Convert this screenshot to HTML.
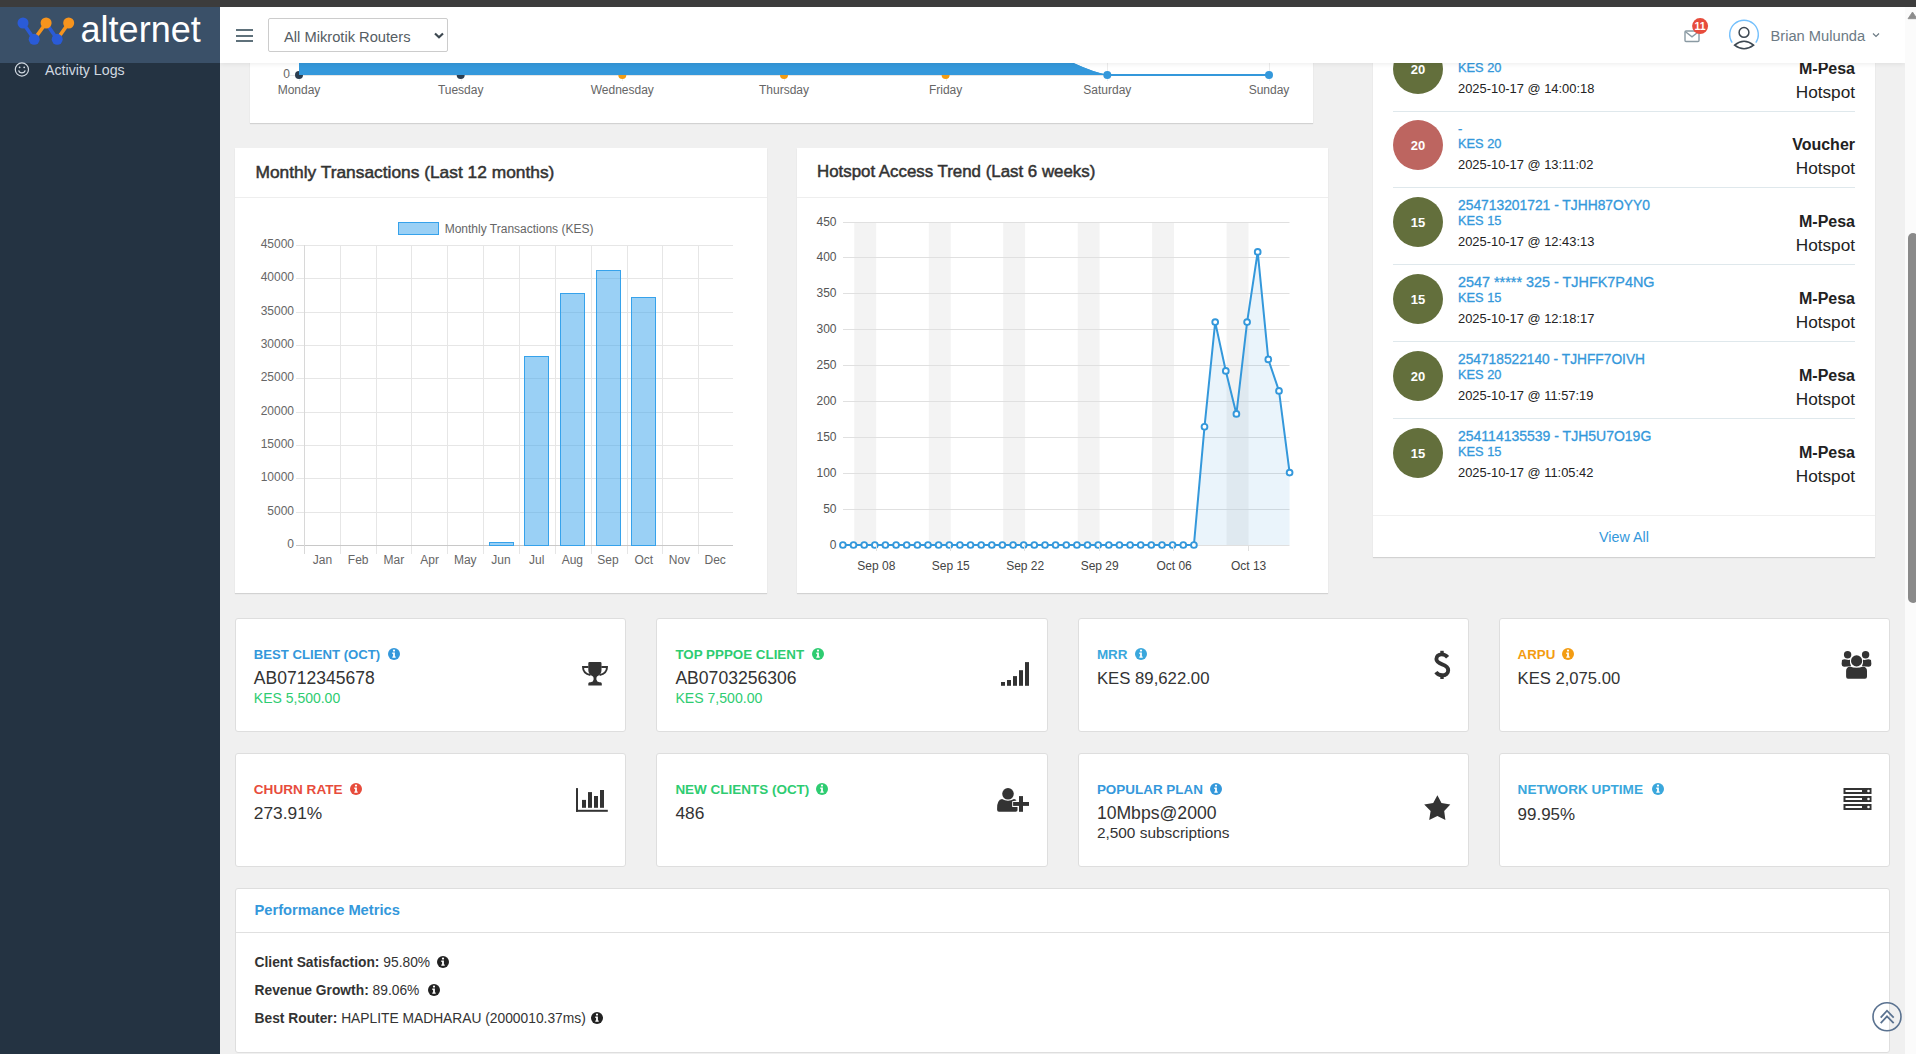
<!DOCTYPE html>
<html><head><meta charset="utf-8"><style>
html,body{margin:0;padding:0;}
body{width:1916px;height:1054px;overflow:hidden;position:relative;background:#f0f0f0;font-family:"Liberation Sans",sans-serif;}
.t{position:absolute;white-space:nowrap;}
</style></head><body>
<div style="position:absolute;left:250px;top:0px;width:1063px;height:123px;background:#fff;box-shadow:0 1px 1px rgba(0,0,0,0.12);"></div>
<div style="position:absolute;left:235px;top:148px;width:532px;height:445px;background:#fff;box-shadow:0 1px 1px rgba(0,0,0,0.12);"></div>
<div style="position:absolute;left:235px;top:197px;width:532px;height:1px;background:#eee;"></div>
<div style="position:absolute;left:797px;top:148px;width:531px;height:445px;background:#fff;box-shadow:0 1px 1px rgba(0,0,0,0.12);"></div>
<div style="position:absolute;left:797px;top:197px;width:531px;height:1px;background:#eee;"></div>
<div style="position:absolute;left:1373px;top:0px;width:502px;height:557px;background:#fff;box-shadow:0 1px 1px rgba(0,0,0,0.12);"></div>
<div style="position:absolute;left:1373px;top:515px;width:502px;height:1px;background:#f0f0f0;"></div>
<div style="position:absolute;left:235px;top:618px;width:391px;height:114px;background:#fff;border:1px solid #dedede;border-radius:3px;box-sizing:border-box;"></div>
<div style="position:absolute;left:656px;top:618px;width:392px;height:114px;background:#fff;border:1px solid #dedede;border-radius:3px;box-sizing:border-box;"></div>
<div style="position:absolute;left:1078px;top:618px;width:391px;height:114px;background:#fff;border:1px solid #dedede;border-radius:3px;box-sizing:border-box;"></div>
<div style="position:absolute;left:1499px;top:618px;width:391px;height:114px;background:#fff;border:1px solid #dedede;border-radius:3px;box-sizing:border-box;"></div>
<div style="position:absolute;left:235px;top:753px;width:391px;height:114px;background:#fff;border:1px solid #dedede;border-radius:3px;box-sizing:border-box;"></div>
<div style="position:absolute;left:656px;top:753px;width:392px;height:114px;background:#fff;border:1px solid #dedede;border-radius:3px;box-sizing:border-box;"></div>
<div style="position:absolute;left:1078px;top:753px;width:391px;height:114px;background:#fff;border:1px solid #dedede;border-radius:3px;box-sizing:border-box;"></div>
<div style="position:absolute;left:1499px;top:753px;width:391px;height:114px;background:#fff;border:1px solid #dedede;border-radius:3px;box-sizing:border-box;"></div>
<div style="position:absolute;left:235px;top:888px;width:1655px;height:165px;background:#fff;border:1px solid #dedede;border-radius:3px;box-sizing:border-box;"></div>
<div style="position:absolute;left:236px;top:932px;width:1653px;height:1px;background:#e0e0e0;"></div>
<svg style="position:absolute;left:0;top:0" width="1916" height="1054"><path d="M299 75 L299 63 L1073.5 63 Q1094 72.5 1108.5 75 Z" fill="#3498db"/><line x1="289" y1="75.5" x2="1269" y2="75.5" stroke="#e5e5e5" stroke-width="1"/><line x1="1108.5" y1="75" x2="1269" y2="75" stroke="#3498db" stroke-width="2"/><line x1="299.5" y1="63" x2="299.5" y2="81" stroke="#ececec" stroke-width="1"/><circle cx="299" cy="75" r="4" fill="#2c3e50"/><line x1="461.5" y1="63" x2="461.5" y2="81" stroke="#ececec" stroke-width="1"/><circle cx="460.7" cy="75" r="4" fill="#2c3e50"/><line x1="622.5" y1="63" x2="622.5" y2="81" stroke="#ececec" stroke-width="1"/><circle cx="622.3" cy="75" r="4" fill="#f39c12"/><line x1="784.5" y1="63" x2="784.5" y2="81" stroke="#ececec" stroke-width="1"/><circle cx="784" cy="75" r="4" fill="#f39c12"/><line x1="946.5" y1="63" x2="946.5" y2="81" stroke="#ececec" stroke-width="1"/><circle cx="945.6" cy="75" r="4" fill="#f39c12"/><line x1="1107.5" y1="63" x2="1107.5" y2="81" stroke="#ececec" stroke-width="1"/><circle cx="1107.3" cy="75" r="4" fill="#3498db"/><line x1="1269.5" y1="63" x2="1269.5" y2="81" stroke="#ececec" stroke-width="1"/><circle cx="1269" cy="75" r="4" fill="#3498db"/><path d="M299 63 L1073.5 63 Q1094 72.5 1108.5 75 L299 75 Z" fill="#3498db"/><line x1="296" y1="545.5" x2="733" y2="545.5" stroke="#e6e6e6" stroke-width="1"/><line x1="296" y1="512.5" x2="733" y2="512.5" stroke="#e6e6e6" stroke-width="1"/><line x1="296" y1="478.5" x2="733" y2="478.5" stroke="#e6e6e6" stroke-width="1"/><line x1="296" y1="445.5" x2="733" y2="445.5" stroke="#e6e6e6" stroke-width="1"/><line x1="296" y1="412.5" x2="733" y2="412.5" stroke="#e6e6e6" stroke-width="1"/><line x1="296" y1="378.5" x2="733" y2="378.5" stroke="#e6e6e6" stroke-width="1"/><line x1="296" y1="345.5" x2="733" y2="345.5" stroke="#e6e6e6" stroke-width="1"/><line x1="296" y1="312.5" x2="733" y2="312.5" stroke="#e6e6e6" stroke-width="1"/><line x1="296" y1="278.5" x2="733" y2="278.5" stroke="#e6e6e6" stroke-width="1"/><line x1="296" y1="245.5" x2="733" y2="245.5" stroke="#e6e6e6" stroke-width="1"/><line x1="304.5" y1="245" x2="304.5" y2="554" stroke="#e6e6e6" stroke-width="1"/><line x1="340.5" y1="245" x2="340.5" y2="554" stroke="#e6e6e6" stroke-width="1"/><line x1="376.5" y1="245" x2="376.5" y2="554" stroke="#e6e6e6" stroke-width="1"/><line x1="411.5" y1="245" x2="411.5" y2="554" stroke="#e6e6e6" stroke-width="1"/><line x1="447.5" y1="245" x2="447.5" y2="554" stroke="#e6e6e6" stroke-width="1"/><line x1="483.5" y1="245" x2="483.5" y2="554" stroke="#e6e6e6" stroke-width="1"/><line x1="519.5" y1="245" x2="519.5" y2="554" stroke="#e6e6e6" stroke-width="1"/><line x1="555.5" y1="245" x2="555.5" y2="554" stroke="#e6e6e6" stroke-width="1"/><line x1="591.5" y1="245" x2="591.5" y2="554" stroke="#e6e6e6" stroke-width="1"/><line x1="627.5" y1="245" x2="627.5" y2="554" stroke="#e6e6e6" stroke-width="1"/><line x1="662.5" y1="245" x2="662.5" y2="554" stroke="#e6e6e6" stroke-width="1"/><line x1="698.5" y1="245" x2="698.5" y2="554" stroke="#e6e6e6" stroke-width="1"/><line x1="296" y1="545.5" x2="733" y2="545.5" stroke="#c8c8c8" stroke-width="1"/><line x1="304.5" y1="245" x2="304.5" y2="554" stroke="#d8d8d8" stroke-width="1"/><rect x="489.5" y="542.5" width="24" height="3" fill="rgba(54,162,235,0.5)" stroke="#36a2eb" stroke-width="1"/><rect x="524.5" y="356.5" width="24" height="189" fill="rgba(54,162,235,0.5)" stroke="#36a2eb" stroke-width="1"/><rect x="560.5" y="293.5" width="24" height="252" fill="rgba(54,162,235,0.5)" stroke="#36a2eb" stroke-width="1"/><rect x="596.5" y="270.5" width="24" height="275" fill="rgba(54,162,235,0.5)" stroke="#36a2eb" stroke-width="1"/><rect x="631.5" y="297.5" width="24" height="248" fill="rgba(54,162,235,0.5)" stroke="#36a2eb" stroke-width="1"/><rect x="398.5" y="222.5" width="40" height="12" fill="rgba(54,162,235,0.5)" stroke="#36a2eb" stroke-width="1"/><rect x="854.3" y="223" width="21.9" height="322" fill="#f3f3f3"/><rect x="928.8" y="223" width="21.9" height="322" fill="#f3f3f3"/><rect x="1003.2" y="223" width="21.9" height="322" fill="#f3f3f3"/><rect x="1077.7" y="223" width="21.9" height="322" fill="#f3f3f3"/><rect x="1152.1" y="223" width="21.9" height="322" fill="#f3f3f3"/><rect x="1226.6" y="223" width="21.9" height="322" fill="#f3f3f3"/><line x1="843" y1="545.5" x2="1289.5" y2="545.5" stroke="#e0e0e0" stroke-width="1"/><line x1="843" y1="509.5" x2="1289.5" y2="509.5" stroke="#e0e0e0" stroke-width="1"/><line x1="843" y1="473.5" x2="1289.5" y2="473.5" stroke="#e0e0e0" stroke-width="1"/><line x1="843" y1="437.5" x2="1289.5" y2="437.5" stroke="#e0e0e0" stroke-width="1"/><line x1="843" y1="401.5" x2="1289.5" y2="401.5" stroke="#e0e0e0" stroke-width="1"/><line x1="843" y1="365.5" x2="1289.5" y2="365.5" stroke="#e0e0e0" stroke-width="1"/><line x1="843" y1="329.5" x2="1289.5" y2="329.5" stroke="#e0e0e0" stroke-width="1"/><line x1="843" y1="293.5" x2="1289.5" y2="293.5" stroke="#e0e0e0" stroke-width="1"/><line x1="843" y1="257.5" x2="1289.5" y2="257.5" stroke="#e0e0e0" stroke-width="1"/><line x1="843" y1="222.5" x2="1289.5" y2="222.5" stroke="#e0e0e0" stroke-width="1"/><path d="M842.9 545.0 L853.5 545.0 L864.2 545.0 L874.8 545.0 L885.4 545.0 L896.1 545.0 L906.7 545.0 L917.4 545.0 L928.0 545.0 L938.6 545.0 L949.3 545.0 L959.9 545.0 L970.5 545.0 L981.2 545.0 L991.8 545.0 L1002.4 545.0 L1013.1 545.0 L1023.7 545.0 L1034.3 545.0 L1045.0 545.0 L1055.6 545.0 L1066.3 545.0 L1076.9 545.0 L1087.5 545.0 L1098.2 545.0 L1108.8 545.0 L1119.4 545.0 L1130.1 545.0 L1140.7 545.0 L1151.3 545.0 L1162.0 545.0 L1172.6 545.0 L1183.3 545.0 L1193.9 545.0 L1204.5 426.8 L1215.2 322.1 L1225.8 370.9 L1236.4 413.9 L1247.1 322.1 L1257.7 251.9 L1268.3 359.4 L1279.0 390.9 L1289.6 472.6 L1289.6 545 L842.9 545 Z" fill="rgba(52,152,219,0.1)"/><path d="M842.9 545.0 L853.5 545.0 L864.2 545.0 L874.8 545.0 L885.4 545.0 L896.1 545.0 L906.7 545.0 L917.4 545.0 L928.0 545.0 L938.6 545.0 L949.3 545.0 L959.9 545.0 L970.5 545.0 L981.2 545.0 L991.8 545.0 L1002.4 545.0 L1013.1 545.0 L1023.7 545.0 L1034.3 545.0 L1045.0 545.0 L1055.6 545.0 L1066.3 545.0 L1076.9 545.0 L1087.5 545.0 L1098.2 545.0 L1108.8 545.0 L1119.4 545.0 L1130.1 545.0 L1140.7 545.0 L1151.3 545.0 L1162.0 545.0 L1172.6 545.0 L1183.3 545.0 L1193.9 545.0 L1204.5 426.8 L1215.2 322.1 L1225.8 370.9 L1236.4 413.9 L1247.1 322.1 L1257.7 251.9 L1268.3 359.4 L1279.0 390.9 L1289.6 472.6" fill="none" stroke="#3498db" stroke-width="2"/><circle cx="842.9" cy="545.0" r="2.9" fill="#fff" stroke="#3498db" stroke-width="1.9"/><circle cx="853.5" cy="545.0" r="2.9" fill="#fff" stroke="#3498db" stroke-width="1.9"/><circle cx="864.2" cy="545.0" r="2.9" fill="#fff" stroke="#3498db" stroke-width="1.9"/><circle cx="874.8" cy="545.0" r="2.9" fill="#fff" stroke="#3498db" stroke-width="1.9"/><circle cx="885.4" cy="545.0" r="2.9" fill="#fff" stroke="#3498db" stroke-width="1.9"/><circle cx="896.1" cy="545.0" r="2.9" fill="#fff" stroke="#3498db" stroke-width="1.9"/><circle cx="906.7" cy="545.0" r="2.9" fill="#fff" stroke="#3498db" stroke-width="1.9"/><circle cx="917.4" cy="545.0" r="2.9" fill="#fff" stroke="#3498db" stroke-width="1.9"/><circle cx="928.0" cy="545.0" r="2.9" fill="#fff" stroke="#3498db" stroke-width="1.9"/><circle cx="938.6" cy="545.0" r="2.9" fill="#fff" stroke="#3498db" stroke-width="1.9"/><circle cx="949.3" cy="545.0" r="2.9" fill="#fff" stroke="#3498db" stroke-width="1.9"/><circle cx="959.9" cy="545.0" r="2.9" fill="#fff" stroke="#3498db" stroke-width="1.9"/><circle cx="970.5" cy="545.0" r="2.9" fill="#fff" stroke="#3498db" stroke-width="1.9"/><circle cx="981.2" cy="545.0" r="2.9" fill="#fff" stroke="#3498db" stroke-width="1.9"/><circle cx="991.8" cy="545.0" r="2.9" fill="#fff" stroke="#3498db" stroke-width="1.9"/><circle cx="1002.4" cy="545.0" r="2.9" fill="#fff" stroke="#3498db" stroke-width="1.9"/><circle cx="1013.1" cy="545.0" r="2.9" fill="#fff" stroke="#3498db" stroke-width="1.9"/><circle cx="1023.7" cy="545.0" r="2.9" fill="#fff" stroke="#3498db" stroke-width="1.9"/><circle cx="1034.3" cy="545.0" r="2.9" fill="#fff" stroke="#3498db" stroke-width="1.9"/><circle cx="1045.0" cy="545.0" r="2.9" fill="#fff" stroke="#3498db" stroke-width="1.9"/><circle cx="1055.6" cy="545.0" r="2.9" fill="#fff" stroke="#3498db" stroke-width="1.9"/><circle cx="1066.3" cy="545.0" r="2.9" fill="#fff" stroke="#3498db" stroke-width="1.9"/><circle cx="1076.9" cy="545.0" r="2.9" fill="#fff" stroke="#3498db" stroke-width="1.9"/><circle cx="1087.5" cy="545.0" r="2.9" fill="#fff" stroke="#3498db" stroke-width="1.9"/><circle cx="1098.2" cy="545.0" r="2.9" fill="#fff" stroke="#3498db" stroke-width="1.9"/><circle cx="1108.8" cy="545.0" r="2.9" fill="#fff" stroke="#3498db" stroke-width="1.9"/><circle cx="1119.4" cy="545.0" r="2.9" fill="#fff" stroke="#3498db" stroke-width="1.9"/><circle cx="1130.1" cy="545.0" r="2.9" fill="#fff" stroke="#3498db" stroke-width="1.9"/><circle cx="1140.7" cy="545.0" r="2.9" fill="#fff" stroke="#3498db" stroke-width="1.9"/><circle cx="1151.3" cy="545.0" r="2.9" fill="#fff" stroke="#3498db" stroke-width="1.9"/><circle cx="1162.0" cy="545.0" r="2.9" fill="#fff" stroke="#3498db" stroke-width="1.9"/><circle cx="1172.6" cy="545.0" r="2.9" fill="#fff" stroke="#3498db" stroke-width="1.9"/><circle cx="1183.3" cy="545.0" r="2.9" fill="#fff" stroke="#3498db" stroke-width="1.9"/><circle cx="1193.9" cy="545.0" r="2.9" fill="#fff" stroke="#3498db" stroke-width="1.9"/><circle cx="1204.5" cy="426.8" r="2.9" fill="#fff" stroke="#3498db" stroke-width="1.9"/><circle cx="1215.2" cy="322.1" r="2.9" fill="#fff" stroke="#3498db" stroke-width="1.9"/><circle cx="1225.8" cy="370.9" r="2.9" fill="#fff" stroke="#3498db" stroke-width="1.9"/><circle cx="1236.4" cy="413.9" r="2.9" fill="#fff" stroke="#3498db" stroke-width="1.9"/><circle cx="1247.1" cy="322.1" r="2.9" fill="#fff" stroke="#3498db" stroke-width="1.9"/><circle cx="1257.7" cy="251.9" r="2.9" fill="#fff" stroke="#3498db" stroke-width="1.9"/><circle cx="1268.3" cy="359.4" r="2.9" fill="#fff" stroke="#3498db" stroke-width="1.9"/><circle cx="1279.0" cy="390.9" r="2.9" fill="#fff" stroke="#3498db" stroke-width="1.9"/><circle cx="1289.6" cy="472.6" r="2.9" fill="#fff" stroke="#3498db" stroke-width="1.9"/><line x1="876.5" y1="545" x2="876.5" y2="551" stroke="#e0e0e0" stroke-width="1"/><line x1="950.5" y1="545" x2="950.5" y2="551" stroke="#e0e0e0" stroke-width="1"/><line x1="1024.5" y1="545" x2="1024.5" y2="551" stroke="#e0e0e0" stroke-width="1"/><line x1="1099.5" y1="545" x2="1099.5" y2="551" stroke="#e0e0e0" stroke-width="1"/><line x1="1173.5" y1="545" x2="1173.5" y2="551" stroke="#e0e0e0" stroke-width="1"/><line x1="1248.5" y1="545" x2="1248.5" y2="551" stroke="#e0e0e0" stroke-width="1"/></svg>
<div class="t" style="right:1626.00px;top:68.34px;font-size:12px;line-height:12px;color:#666;font-weight:400;">0</div>
<div class="t" style="left:-1.00px;width:600px;text-align:center;top:83.94px;font-size:12px;line-height:12px;color:#666;font-weight:400;">Monday</div>
<div class="t" style="left:160.70px;width:600px;text-align:center;top:83.94px;font-size:12px;line-height:12px;color:#666;font-weight:400;">Tuesday</div>
<div class="t" style="left:322.30px;width:600px;text-align:center;top:83.94px;font-size:12px;line-height:12px;color:#666;font-weight:400;">Wednesday</div>
<div class="t" style="left:484.00px;width:600px;text-align:center;top:83.94px;font-size:12px;line-height:12px;color:#666;font-weight:400;">Thursday</div>
<div class="t" style="left:645.60px;width:600px;text-align:center;top:83.94px;font-size:12px;line-height:12px;color:#666;font-weight:400;">Friday</div>
<div class="t" style="left:807.30px;width:600px;text-align:center;top:83.94px;font-size:12px;line-height:12px;color:#666;font-weight:400;">Saturday</div>
<div class="t" style="left:969.00px;width:600px;text-align:center;top:83.94px;font-size:12px;line-height:12px;color:#666;font-weight:400;">Sunday</div>
<div class="t" style="left:255.50px;top:163.61px;font-size:17.35px;line-height:17.35px;color:#333;font-weight:400;-webkit-text-stroke:0.5px #333;">Monthly Transactions (Last 12 months)</div>
<div class="t" style="left:817.00px;top:164.02px;font-size:16.87px;line-height:16.87px;color:#333;font-weight:400;-webkit-text-stroke:0.5px #333;">Hotspot Access Trend (Last 6 weeks)</div>
<div class="t" style="left:444.70px;top:222.54px;font-size:12px;line-height:12px;color:#666;font-weight:400;">Monthly Transactions (KES)</div>
<div class="t" style="right:1622.00px;top:537.94px;font-size:12px;line-height:12px;color:#666;font-weight:400;">0</div>
<div class="t" style="right:1622.00px;top:504.94px;font-size:12px;line-height:12px;color:#666;font-weight:400;">5000</div>
<div class="t" style="right:1622.00px;top:470.94px;font-size:12px;line-height:12px;color:#666;font-weight:400;">10000</div>
<div class="t" style="right:1622.00px;top:437.94px;font-size:12px;line-height:12px;color:#666;font-weight:400;">15000</div>
<div class="t" style="right:1622.00px;top:404.94px;font-size:12px;line-height:12px;color:#666;font-weight:400;">20000</div>
<div class="t" style="right:1622.00px;top:370.94px;font-size:12px;line-height:12px;color:#666;font-weight:400;">25000</div>
<div class="t" style="right:1622.00px;top:337.94px;font-size:12px;line-height:12px;color:#666;font-weight:400;">30000</div>
<div class="t" style="right:1622.00px;top:304.94px;font-size:12px;line-height:12px;color:#666;font-weight:400;">35000</div>
<div class="t" style="right:1622.00px;top:270.94px;font-size:12px;line-height:12px;color:#666;font-weight:400;">40000</div>
<div class="t" style="right:1622.00px;top:237.94px;font-size:12px;line-height:12px;color:#666;font-weight:400;">45000</div>
<div class="t" style="left:22.45px;width:600px;text-align:center;top:554.14px;font-size:12px;line-height:12px;color:#666;font-weight:400;">Jan</div>
<div class="t" style="left:58.15px;width:600px;text-align:center;top:554.14px;font-size:12px;line-height:12px;color:#666;font-weight:400;">Feb</div>
<div class="t" style="left:93.85px;width:600px;text-align:center;top:554.14px;font-size:12px;line-height:12px;color:#666;font-weight:400;">Mar</div>
<div class="t" style="left:129.55px;width:600px;text-align:center;top:554.14px;font-size:12px;line-height:12px;color:#666;font-weight:400;">Apr</div>
<div class="t" style="left:165.25px;width:600px;text-align:center;top:554.14px;font-size:12px;line-height:12px;color:#666;font-weight:400;">May</div>
<div class="t" style="left:200.95px;width:600px;text-align:center;top:554.14px;font-size:12px;line-height:12px;color:#666;font-weight:400;">Jun</div>
<div class="t" style="left:236.65px;width:600px;text-align:center;top:554.14px;font-size:12px;line-height:12px;color:#666;font-weight:400;">Jul</div>
<div class="t" style="left:272.35px;width:600px;text-align:center;top:554.14px;font-size:12px;line-height:12px;color:#666;font-weight:400;">Aug</div>
<div class="t" style="left:308.05px;width:600px;text-align:center;top:554.14px;font-size:12px;line-height:12px;color:#666;font-weight:400;">Sep</div>
<div class="t" style="left:343.75px;width:600px;text-align:center;top:554.14px;font-size:12px;line-height:12px;color:#666;font-weight:400;">Oct</div>
<div class="t" style="left:379.45px;width:600px;text-align:center;top:554.14px;font-size:12px;line-height:12px;color:#666;font-weight:400;">Nov</div>
<div class="t" style="left:415.15px;width:600px;text-align:center;top:554.14px;font-size:12px;line-height:12px;color:#666;font-weight:400;">Dec</div>
<div class="t" style="right:1079.50px;top:539.14px;font-size:12px;line-height:12px;color:#555;font-weight:400;">0</div>
<div class="t" style="right:1079.50px;top:503.14px;font-size:12px;line-height:12px;color:#555;font-weight:400;">50</div>
<div class="t" style="right:1079.50px;top:467.14px;font-size:12px;line-height:12px;color:#555;font-weight:400;">100</div>
<div class="t" style="right:1079.50px;top:431.14px;font-size:12px;line-height:12px;color:#555;font-weight:400;">150</div>
<div class="t" style="right:1079.50px;top:395.14px;font-size:12px;line-height:12px;color:#555;font-weight:400;">200</div>
<div class="t" style="right:1079.50px;top:359.14px;font-size:12px;line-height:12px;color:#555;font-weight:400;">250</div>
<div class="t" style="right:1079.50px;top:323.14px;font-size:12px;line-height:12px;color:#555;font-weight:400;">300</div>
<div class="t" style="right:1079.50px;top:287.14px;font-size:12px;line-height:12px;color:#555;font-weight:400;">350</div>
<div class="t" style="right:1079.50px;top:251.14px;font-size:12px;line-height:12px;color:#555;font-weight:400;">400</div>
<div class="t" style="right:1079.50px;top:216.14px;font-size:12px;line-height:12px;color:#555;font-weight:400;">450</div>
<div class="t" style="left:576.31px;width:600px;text-align:center;top:559.54px;font-size:12px;line-height:12px;color:#444;font-weight:400;">Sep 08</div>
<div class="t" style="left:650.76px;width:600px;text-align:center;top:559.54px;font-size:12px;line-height:12px;color:#444;font-weight:400;">Sep 15</div>
<div class="t" style="left:725.21px;width:600px;text-align:center;top:559.54px;font-size:12px;line-height:12px;color:#444;font-weight:400;">Sep 22</div>
<div class="t" style="left:799.66px;width:600px;text-align:center;top:559.54px;font-size:12px;line-height:12px;color:#444;font-weight:400;">Sep 29</div>
<div class="t" style="left:874.12px;width:600px;text-align:center;top:559.54px;font-size:12px;line-height:12px;color:#444;font-weight:400;">Oct 06</div>
<div class="t" style="left:948.57px;width:600px;text-align:center;top:559.54px;font-size:12px;line-height:12px;color:#444;font-weight:400;">Oct 13</div>
<div style="position:absolute;left:1393px;top:43.9px;width:50px;height:50px;background:#636f3c;border-radius:50%;"></div>
<div class="t" style="left:1118.00px;width:600px;text-align:center;top:62.70px;font-size:13px;line-height:13px;color:#fff;font-weight:700;">20</div>
<div class="t" style="left:1458.00px;top:45.49px;font-size:13.83px;line-height:13.83px;color:#3498db;font-weight:400;-webkit-text-stroke:0.3px #3498db;">254700000000 - TJHHOLD0</div>
<div class="t" style="left:1458.00px;top:61.96px;font-size:12.8px;line-height:12.8px;color:#3498db;font-weight:400;-webkit-text-stroke:0.3px #3498db;">KES 20</div>
<div class="t" style="left:1458.00px;top:83.18px;font-size:12.9px;line-height:12.9px;color:#222;font-weight:400;">2025-10-17 @ 14:00:18</div>
<div class="t" style="right:61.00px;top:60.66px;font-size:16px;line-height:16px;color:#222;font-weight:700;">M-Pesa</div>
<div class="t" style="right:61.00px;top:83.64px;font-size:17.2px;line-height:17.2px;color:#222;font-weight:400;">Hotspot</div>
<div style="position:absolute;left:1393px;top:111.19999999999999px;width:462px;height:1px;background:#dfe8ec;"></div>
<div style="position:absolute;left:1393px;top:120px;width:50px;height:50px;background:#bd6560;border-radius:50%;"></div>
<div class="t" style="left:1118.00px;width:600px;text-align:center;top:138.80px;font-size:13px;line-height:13px;color:#fff;font-weight:700;">20</div>
<div class="t" style="left:1458.00px;top:122.30px;font-size:13px;line-height:13px;color:#3498db;font-weight:400;-webkit-text-stroke:0.3px #3498db;">-</div>
<div class="t" style="left:1458.00px;top:138.06px;font-size:12.8px;line-height:12.8px;color:#3498db;font-weight:400;-webkit-text-stroke:0.3px #3498db;">KES 20</div>
<div class="t" style="left:1458.00px;top:159.28px;font-size:12.9px;line-height:12.9px;color:#222;font-weight:400;">2025-10-17 @ 13:11:02</div>
<div class="t" style="right:61.00px;top:136.76px;font-size:16px;line-height:16px;color:#222;font-weight:700;">Voucher</div>
<div class="t" style="right:61.00px;top:159.74px;font-size:17.2px;line-height:17.2px;color:#222;font-weight:400;">Hotspot</div>
<div style="position:absolute;left:1393px;top:187.3px;width:462px;height:1px;background:#dfe8ec;"></div>
<div style="position:absolute;left:1393px;top:197px;width:50px;height:50px;background:#636f3c;border-radius:50%;"></div>
<div class="t" style="left:1118.00px;width:600px;text-align:center;top:215.80px;font-size:13px;line-height:13px;color:#fff;font-weight:700;">15</div>
<div class="t" style="left:1458.00px;top:198.59px;font-size:13.83px;line-height:13.83px;color:#3498db;font-weight:400;-webkit-text-stroke:0.3px #3498db;">254713201721 - TJHH87OYY0</div>
<div class="t" style="left:1458.00px;top:215.06px;font-size:12.8px;line-height:12.8px;color:#3498db;font-weight:400;-webkit-text-stroke:0.3px #3498db;">KES 15</div>
<div class="t" style="left:1458.00px;top:236.28px;font-size:12.9px;line-height:12.9px;color:#222;font-weight:400;">2025-10-17 @ 12:43:13</div>
<div class="t" style="right:61.00px;top:213.76px;font-size:16px;line-height:16px;color:#222;font-weight:700;">M-Pesa</div>
<div class="t" style="right:61.00px;top:236.74px;font-size:17.2px;line-height:17.2px;color:#222;font-weight:400;">Hotspot</div>
<div style="position:absolute;left:1393px;top:264.3px;width:462px;height:1px;background:#dfe8ec;"></div>
<div style="position:absolute;left:1393px;top:274px;width:50px;height:50px;background:#636f3c;border-radius:50%;"></div>
<div class="t" style="left:1118.00px;width:600px;text-align:center;top:292.80px;font-size:13px;line-height:13px;color:#fff;font-weight:700;">15</div>
<div class="t" style="left:1458.00px;top:275.11px;font-size:14.4px;line-height:14.4px;color:#3498db;font-weight:400;-webkit-text-stroke:0.3px #3498db;">2547 ***** 325 - TJHFK7P4NG</div>
<div class="t" style="left:1458.00px;top:292.06px;font-size:12.8px;line-height:12.8px;color:#3498db;font-weight:400;-webkit-text-stroke:0.3px #3498db;">KES 15</div>
<div class="t" style="left:1458.00px;top:313.28px;font-size:12.9px;line-height:12.9px;color:#222;font-weight:400;">2025-10-17 @ 12:18:17</div>
<div class="t" style="right:61.00px;top:290.76px;font-size:16px;line-height:16px;color:#222;font-weight:700;">M-Pesa</div>
<div class="t" style="right:61.00px;top:313.74px;font-size:17.2px;line-height:17.2px;color:#222;font-weight:400;">Hotspot</div>
<div style="position:absolute;left:1393px;top:341.3px;width:462px;height:1px;background:#dfe8ec;"></div>
<div style="position:absolute;left:1393px;top:351px;width:50px;height:50px;background:#636f3c;border-radius:50%;"></div>
<div class="t" style="left:1118.00px;width:600px;text-align:center;top:369.80px;font-size:13px;line-height:13px;color:#fff;font-weight:700;">20</div>
<div class="t" style="left:1458.00px;top:352.66px;font-size:13.75px;line-height:13.75px;color:#3498db;font-weight:400;-webkit-text-stroke:0.3px #3498db;">254718522140 - TJHFF7OIVH</div>
<div class="t" style="left:1458.00px;top:369.06px;font-size:12.8px;line-height:12.8px;color:#3498db;font-weight:400;-webkit-text-stroke:0.3px #3498db;">KES 20</div>
<div class="t" style="left:1458.00px;top:390.28px;font-size:12.9px;line-height:12.9px;color:#222;font-weight:400;">2025-10-17 @ 11:57:19</div>
<div class="t" style="right:61.00px;top:367.76px;font-size:16px;line-height:16px;color:#222;font-weight:700;">M-Pesa</div>
<div class="t" style="right:61.00px;top:390.74px;font-size:17.2px;line-height:17.2px;color:#222;font-weight:400;">Hotspot</div>
<div style="position:absolute;left:1393px;top:418.3px;width:462px;height:1px;background:#dfe8ec;"></div>
<div style="position:absolute;left:1393px;top:428px;width:50px;height:50px;background:#636f3c;border-radius:50%;"></div>
<div class="t" style="left:1118.00px;width:600px;text-align:center;top:446.80px;font-size:13px;line-height:13px;color:#fff;font-weight:700;">15</div>
<div class="t" style="left:1458.00px;top:429.45px;font-size:14.0px;line-height:14.0px;color:#3498db;font-weight:400;-webkit-text-stroke:0.3px #3498db;">254114135539 - TJH5U7O19G</div>
<div class="t" style="left:1458.00px;top:446.06px;font-size:12.8px;line-height:12.8px;color:#3498db;font-weight:400;-webkit-text-stroke:0.3px #3498db;">KES 15</div>
<div class="t" style="left:1458.00px;top:467.28px;font-size:12.9px;line-height:12.9px;color:#222;font-weight:400;">2025-10-17 @ 11:05:42</div>
<div class="t" style="right:61.00px;top:444.76px;font-size:16px;line-height:16px;color:#222;font-weight:700;">M-Pesa</div>
<div class="t" style="right:61.00px;top:467.74px;font-size:17.2px;line-height:17.2px;color:#222;font-weight:400;">Hotspot</div>
<div class="t" style="left:1324.00px;width:600px;text-align:center;top:530.20px;font-size:14.3px;line-height:14.3px;color:#3498db;font-weight:400;">View All</div>
<div class="t" style="left:253.80px;top:648.16px;font-size:13.16px;line-height:13.16px;color:#3498db;font-weight:700;">BEST CLIENT (OCT)</div>
<svg style="position:absolute;left:387.80px;top:647.90px" width="12" height="12" viewBox="0 0 12 12"><circle cx="6" cy="6" r="6" fill="#3498db"/><circle cx="6" cy="2.6" r="1.1" fill="#fff"/><path d="M4.3 4.6 H6.9 V8.4 H7.7 V9.7 H4.3 V8.4 H5.1 V5.9 H4.3 Z" fill="#fff"/></svg>
<div class="t" style="left:253.80px;top:670.24px;font-size:17.55px;line-height:17.55px;color:#333;font-weight:400;">AB0712345678</div>
<div class="t" style="left:253.80px;top:690.95px;font-size:14.0px;line-height:14.0px;color:#2ecc71;font-weight:400;">KES 5,500.00</div>
<div class="t" style="left:675.40px;top:647.99px;font-size:13.36px;line-height:13.36px;color:#2ecc71;font-weight:700;">TOP PPPOE CLIENT</div>
<svg style="position:absolute;left:811.50px;top:647.90px" width="12" height="12" viewBox="0 0 12 12"><circle cx="6" cy="6" r="6" fill="#2ecc71"/><circle cx="6" cy="2.6" r="1.1" fill="#fff"/><path d="M4.3 4.6 H6.9 V8.4 H7.7 V9.7 H4.3 V8.4 H5.1 V5.9 H4.3 Z" fill="#fff"/></svg>
<div class="t" style="left:675.40px;top:670.21px;font-size:17.59px;line-height:17.59px;color:#333;font-weight:400;">AB0703256306</div>
<div class="t" style="left:675.40px;top:690.86px;font-size:14.1px;line-height:14.1px;color:#2ecc71;font-weight:400;">KES 7,500.00</div>
<div class="t" style="left:1096.90px;top:647.89px;font-size:13.48px;line-height:13.48px;color:#3aa7dc;font-weight:700;">MRR</div>
<svg style="position:absolute;left:1134.60px;top:647.90px" width="12" height="12" viewBox="0 0 12 12"><circle cx="6" cy="6" r="6" fill="#3aa7dc"/><circle cx="6" cy="2.6" r="1.1" fill="#fff"/><path d="M4.3 4.6 H6.9 V8.4 H7.7 V9.7 H4.3 V8.4 H5.1 V5.9 H4.3 Z" fill="#fff"/></svg>
<div class="t" style="left:1096.90px;top:670.93px;font-size:16.74px;line-height:16.74px;color:#333;font-weight:400;">KES 89,622.00</div>
<div class="t" style="left:1517.60px;top:648.04px;font-size:13.3px;line-height:13.3px;color:#f39c12;font-weight:700;">ARPU</div>
<svg style="position:absolute;left:1562.30px;top:647.90px" width="12" height="12" viewBox="0 0 12 12"><circle cx="6" cy="6" r="6" fill="#f39c12"/><circle cx="6" cy="2.6" r="1.1" fill="#fff"/><path d="M4.3 4.6 H6.9 V8.4 H7.7 V9.7 H4.3 V8.4 H5.1 V5.9 H4.3 Z" fill="#fff"/></svg>
<div class="t" style="left:1517.60px;top:671.01px;font-size:16.64px;line-height:16.64px;color:#333;font-weight:400;">KES 2,075.00</div>
<div class="t" style="left:253.80px;top:782.80px;font-size:13.58px;line-height:13.58px;color:#e74c3c;font-weight:700;">CHURN RATE</div>
<svg style="position:absolute;left:349.60px;top:782.90px" width="12" height="12" viewBox="0 0 12 12"><circle cx="6" cy="6" r="6" fill="#e74c3c"/><circle cx="6" cy="2.6" r="1.1" fill="#fff"/><path d="M4.3 4.6 H6.9 V8.4 H7.7 V9.7 H4.3 V8.4 H5.1 V5.9 H4.3 Z" fill="#fff"/></svg>
<div class="t" style="left:253.80px;top:805.41px;font-size:17.35px;line-height:17.35px;color:#333;font-weight:400;">273.91%</div>
<div class="t" style="left:675.40px;top:782.90px;font-size:13.47px;line-height:13.47px;color:#2ecc71;font-weight:700;">NEW CLIENTS (OCT)</div>
<svg style="position:absolute;left:815.90px;top:782.90px" width="12" height="12" viewBox="0 0 12 12"><circle cx="6" cy="6" r="6" fill="#2ecc71"/><circle cx="6" cy="2.6" r="1.1" fill="#fff"/><path d="M4.3 4.6 H6.9 V8.4 H7.7 V9.7 H4.3 V8.4 H5.1 V5.9 H4.3 Z" fill="#fff"/></svg>
<div class="t" style="left:675.40px;top:805.39px;font-size:17.38px;line-height:17.38px;color:#333;font-weight:400;">486</div>
<div class="t" style="left:1096.90px;top:782.91px;font-size:13.45px;line-height:13.45px;color:#3498db;font-weight:700;">POPULAR PLAN</div>
<svg style="position:absolute;left:1210.40px;top:782.90px" width="12" height="12" viewBox="0 0 12 12"><circle cx="6" cy="6" r="6" fill="#3498db"/><circle cx="6" cy="2.6" r="1.1" fill="#fff"/><path d="M4.3 4.6 H6.9 V8.4 H7.7 V9.7 H4.3 V8.4 H5.1 V5.9 H4.3 Z" fill="#fff"/></svg>
<div class="t" style="left:1096.90px;top:805.20px;font-size:17.6px;line-height:17.6px;color:#333;font-weight:400;">10Mbps@2000</div>
<div class="t" style="left:1096.90px;top:824.76px;font-size:15.4px;line-height:15.4px;color:#333;font-weight:400;">2,500 subscriptions</div>
<div class="t" style="left:1517.60px;top:782.79px;font-size:13.6px;line-height:13.6px;color:#3aa7dc;font-weight:700;">NETWORK UPTIME</div>
<svg style="position:absolute;left:1651.50px;top:782.90px" width="12" height="12" viewBox="0 0 12 12"><circle cx="6" cy="6" r="6" fill="#3aa7dc"/><circle cx="6" cy="2.6" r="1.1" fill="#fff"/><path d="M4.3 4.6 H6.9 V8.4 H7.7 V9.7 H4.3 V8.4 H5.1 V5.9 H4.3 Z" fill="#fff"/></svg>
<div class="t" style="left:1517.60px;top:805.73px;font-size:16.98px;line-height:16.98px;color:#333;font-weight:400;">99.95%</div>
<svg style="position:absolute;left:570px;top:650px" width="50" height="50"><path d="M18.3 13.3 Q18.3 12.1 19.5 12.1 L30.3 12.1 Q31.5 12.1 31.5 13.3 L31.5 20 Q31.5 24.5 27 26.5 Q26.2 27.5 26.4 29.5 Q26.8 32 29.5 32.3 L30.5 32.3 Q31.8 32.5 31.8 33.8 L31.8 35.6 L18.3 35.6 L18.3 33.8 Q18.3 32.4 19.6 32.3 L20.6 32.3 Q23.4 32 23.6 29.5 Q23.8 27.5 23 26.5 Q18.3 24.5 18.3 20 Z" fill="#333"/><path d="M18.5 17 L13 17 Q12.9 23.3 20.5 25.2 M31.3 17 L37 17 Q37.1 23.3 29.5 25.2" fill="none" stroke="#333" stroke-width="1.9"/></svg>
<svg style="position:absolute;left:0;top:0" width="1916" height="1054"><rect x="1001" y="682" width="4" height="3.8" fill="#333"/><rect x="1007" y="680" width="4" height="5.8" fill="#333"/><rect x="1013" y="676.1" width="4" height="9.7" fill="#333"/><rect x="1019" y="670.2" width="4" height="15.6" fill="#333"/><rect x="1025" y="662.1" width="4" height="23.7" fill="#333"/><rect x="576" y="788.1" width="2" height="23.7" fill="#333"/><rect x="576" y="809.8" width="31.8" height="2" fill="#333"/><rect x="582" y="799.9" width="4" height="7.9" fill="#333"/><rect x="588" y="792.1" width="4" height="15.7" fill="#333"/><rect x="594" y="796" width="4" height="11.8" fill="#333"/><rect x="600" y="790" width="4" height="17.8" fill="#333"/><circle cx="1847.6" cy="654.7" r="3.7" fill="#333"/><circle cx="1865.6" cy="654.7" r="3.7" fill="#333"/><path d="M1842 660 Q1844 659 1846 659.5 Q1848 660.2 1850 659.8 Q1849.5 663 1851 666 Q1848 666.8 1844 666.8 Q1841.6 666.5 1841.6 664 Z" fill="#333"/><path d="M1871 660 Q1869 659 1867 659.5 Q1865 660.2 1863 659.8 Q1863.5 663 1862 666 Q1865 666.8 1869 666.8 Q1871.4 666.5 1871.4 664 Z" fill="#333"/><circle cx="1856.6" cy="660.9" r="5.6" fill="#333"/><path d="M1846.1 671 Q1846.1 667 1850 666.5 Q1853 667.8 1856.6 667.8 Q1860 667.8 1863 666.5 Q1867 667 1867 671 V676.5 Q1867 678.7 1865 678.7 H1848 Q1846.1 678.7 1846.1 676.5 Z" fill="#333"/><circle cx="1008" cy="793.8" r="5.8" fill="#333"/><path d="M997.1 808.5 Q997.1 799.6 1002 799 Q1005 800.7 1008 800.7 Q1011 800.7 1014 799 Q1015.8 799.3 1016.5 800.6 L1012.2 801.3 L1012.2 807 L1017.5 807 L1017.5 810 Q1017.5 811.8 1015.7 811.8 L999 811.8 Q997.1 811.8 997.1 809.8 Z" fill="#333"/><rect x="1019" y="796.1" width="4" height="15.7" fill="#333"/><rect x="1013.1" y="802" width="15.9" height="3.9" fill="#333"/><path d="M1437.4 795.2 L1441.5 803 L1450.3 804.5 L1444.2 810.9 L1445.4 819.9 L1437.4 816.1 L1429.2 819.9 L1430.6 810.9 L1424.2 804.5 L1433.2 803 Z" fill="#333"/><rect x="1843.5" y="788" width="28" height="6" fill="#333"/><rect x="1845.5" y="790" width="16.5" height="2" fill="#fff"/><circle cx="1868.5" cy="791" r="1.3" fill="#fff"/><rect x="1843.5" y="796" width="28" height="6" fill="#333"/><rect x="1845.5" y="798" width="16.5" height="2" fill="#fff"/><circle cx="1868.5" cy="799" r="1.3" fill="#fff"/><rect x="1843.5" y="804" width="28" height="6" fill="#333"/><rect x="1845.5" y="806" width="16.5" height="2" fill="#fff"/><circle cx="1868.5" cy="807" r="1.3" fill="#fff"/></svg>
<svg style="position:absolute;left:0;top:640px" width="1916" height="50"><g transform="translate(0,-640)"><path d="M1447.6 657.2 C1446 655.2 1444 654.4 1441.8 654.4 C1438.3 654.4 1436.4 656.4 1436.4 659.1 C1436.4 662.2 1439.2 663.3 1442.2 664.3 C1445.8 665.5 1448.2 666.8 1448.2 670.2 C1448.2 673.3 1445.8 675.3 1442.2 675.3 C1439.6 675.3 1437.4 674.2 1435.9 672.2" fill="none" stroke="#333" stroke-width="3.9"/><rect x="1440.3" y="650.8" width="3.4" height="4.5" fill="#333"/><rect x="1440.3" y="674.5" width="3.4" height="4.5" fill="#333"/></g></svg>
<div class="t" style="left:254.50px;top:903.36px;font-size:14.7px;line-height:14.7px;color:#3498db;font-weight:700;">Performance Metrics</div>
<div class="t" style="left:254.50px;top:955.92px;font-size:13.8px;line-height:13.8px;color:#333;font-weight:400;"><b>Client Satisfaction:</b> 95.80%</div>
<div class="t" style="left:254.50px;top:983.92px;font-size:13.8px;line-height:13.8px;color:#333;font-weight:400;"><b>Revenue Growth:</b> 89.06%</div>
<div class="t" style="left:254.50px;top:1011.92px;font-size:13.8px;line-height:13.8px;color:#333;font-weight:400;"><b>Best Router:</b> HAPLITE MADHARAU (2000010.37ms)</div>
<svg style="position:absolute;left:436.90px;top:956.00px" width="12" height="12" viewBox="0 0 12 12"><circle cx="6" cy="6" r="6" fill="#222"/><circle cx="6" cy="2.6" r="1.1" fill="#fff"/><path d="M4.3 4.6 H6.9 V8.4 H7.7 V9.7 H4.3 V8.4 H5.1 V5.9 H4.3 Z" fill="#fff"/></svg>
<svg style="position:absolute;left:427.80px;top:984.00px" width="12" height="12" viewBox="0 0 12 12"><circle cx="6" cy="6" r="6" fill="#222"/><circle cx="6" cy="2.6" r="1.1" fill="#fff"/><path d="M4.3 4.6 H6.9 V8.4 H7.7 V9.7 H4.3 V8.4 H5.1 V5.9 H4.3 Z" fill="#fff"/></svg>
<svg style="position:absolute;left:591.00px;top:1012.00px" width="12" height="12" viewBox="0 0 12 12"><circle cx="6" cy="6" r="6" fill="#222"/><circle cx="6" cy="2.6" r="1.1" fill="#fff"/><path d="M4.3 4.6 H6.9 V8.4 H7.7 V9.7 H4.3 V8.4 H5.1 V5.9 H4.3 Z" fill="#fff"/></svg>
<div style="position:absolute;left:220px;top:7px;width:1685px;height:56px;background:#fff;box-shadow:0 1px 5px rgba(0,0,0,0.08);"></div>
<div style="position:absolute;left:0px;top:0px;width:1916px;height:7px;background:#3c3c3c;"></div>
<div style="position:absolute;left:0px;top:7px;width:220px;height:1047px;background:#243342;"></div>
<div style="position:absolute;left:0px;top:7px;width:220px;height:56px;background:#3a5068;"></div>
<div style="position:absolute;left:236px;top:29px;width:16.5px;height:2px;background:#5f717b;"></div>
<div style="position:absolute;left:236px;top:34.5px;width:16.5px;height:2px;background:#5f717b;"></div>
<div style="position:absolute;left:236px;top:40px;width:16.5px;height:2px;background:#5f717b;"></div>
<div style="position:absolute;left:268px;top:18px;width:180px;height:34px;border:1px solid #ccc;border-radius:2px;box-sizing:border-box;background:#fff;"></div>
<div class="t" style="left:284.00px;top:30.46px;font-size:14.7px;line-height:14.7px;color:#555d63;font-weight:400;">All Mikrotik Routers</div>
<svg style="position:absolute;left:0;top:0" width="1916" height="80"><path d="M435 33.5 L439 37.3 L443 33.5" fill="none" stroke="#3d4850" stroke-width="2.2"/><rect x="1685" y="31" width="14" height="10.5" rx="1" fill="none" stroke="#8a9aa3" stroke-width="1.4"/><path d="M1685.5 31.8 L1692 36.8 L1698.5 31.8" fill="none" stroke="#8a9aa3" stroke-width="1.4"/><circle cx="1700.1" cy="26.1" r="8" fill="#e74c3c"/><path d="M1732.2 42.6 A14.3 14.3 0 1 1 1755.8 42.6" fill="none" stroke="#74c0fc" stroke-width="1.4"/><circle cx="1744" cy="32.4" r="4.9" fill="none" stroke="#3d4852" stroke-width="1.5"/><path d="M1734.6 45.2 Q1744 37.5 1753.6 45.2 Q1744 52.5 1734.6 45.2 Z" fill="none" stroke="#3d4852" stroke-width="1.5"/><path d="M1873 33.5 L1876 36.5 L1879 33.5" fill="none" stroke="#6c7a84" stroke-width="1.2"/><g stroke-width="3.6" stroke-linecap="round"><line x1="23" y1="23" x2="34.2" y2="39.3" stroke="#2a5bd7"/><line x1="34.2" y1="39.3" x2="46.1" y2="23" stroke="#f7941d"/><line x1="46.1" y1="23" x2="57.2" y2="39.3" stroke="#2a5bd7"/><line x1="57.2" y1="39.3" x2="68.7" y2="23" stroke="#f7941d"/></g><circle cx="23" cy="23" r="5.5" fill="#2a5bd7"/><circle cx="46.1" cy="23" r="5.5" fill="#f7941d"/><circle cx="68.7" cy="23" r="5.5" fill="#f7941d"/><circle cx="34.2" cy="39.3" r="5.5" fill="#2a5bd7"/><circle cx="57.2" cy="39.3" r="5.5" fill="#2a5bd7"/><circle cx="21.9" cy="69.5" r="6.6" fill="none" stroke="#d0d8e0" stroke-width="1.2"/><circle cx="19.6" cy="67.3" r="0.9" fill="#d0d8e0"/><circle cx="24.2" cy="67.3" r="0.9" fill="#d0d8e0"/><path d="M18.6 70.3 A3.4 3.4 0 0 0 25.2 70.3" fill="none" stroke="#d0d8e0" stroke-width="1.2"/></svg>
<div class="t" style="left:1400.10px;width:600px;text-align:center;top:21.21px;font-size:10.5px;line-height:10.5px;color:#fff;font-weight:700;">11</div>
<div class="t" style="left:1770.50px;top:29.46px;font-size:14.69px;line-height:14.69px;color:#6c7a84;font-weight:400;">Brian Mulunda</div>
<div style="position:absolute;left:1905px;top:7px;width:11px;height:1047px;background:#fbfbfb;"></div>
<div style="position:absolute;left:1908px;top:233px;width:10px;height:370px;background:#8a8a8a;border-radius:5px;"></div>
<svg style="position:absolute;left:1900px;top:7px" width="16" height="20"><path d="M12.5 5 L17 11.7 L8 11.7 Z" fill="#8c8c8c" stroke="#8c8c8c" stroke-width="0.8" stroke-linejoin="round"/></svg>
<svg style="position:absolute;left:1870px;top:1000px" width="34" height="34"><circle cx="17" cy="16.7" r="14" fill="none" stroke="#5a7290" stroke-width="1.6"/><path d="M10.7 17.6 L17 10.7 L23.7 17.6 M10.7 23.1 L17 16.4 L23.7 23.1" fill="none" stroke="#5a7290" stroke-width="1.8"/></svg>
<div class="t" style="left:45.00px;top:63.38px;font-size:14.2px;line-height:14.2px;color:#d0d8e0;font-weight:400;">Activity Logs</div>
<div class="t" style="left:80.60px;top:12.33px;font-size:36px;line-height:36px;color:#fff;font-weight:400;">alternet</div>
</body></html>
